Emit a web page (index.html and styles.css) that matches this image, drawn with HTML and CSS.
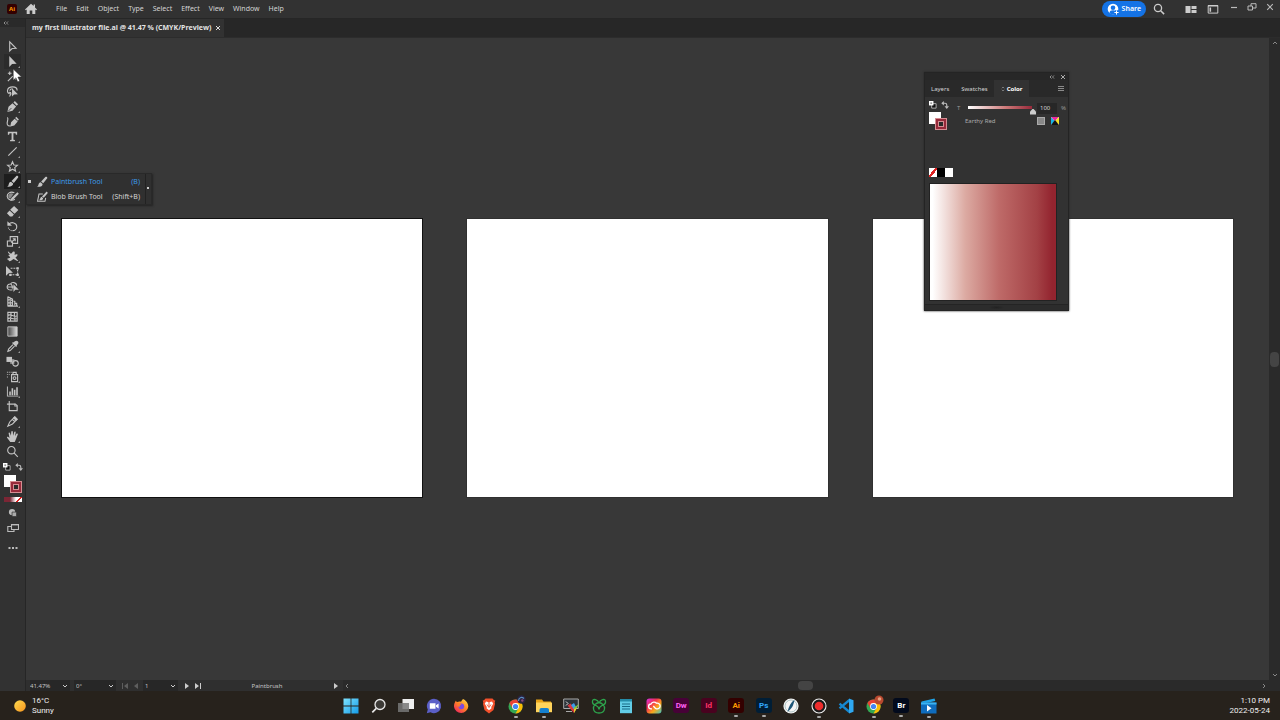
FILE: index.html
```html
<!DOCTYPE html>
<html lang="en">
  <head>
    <meta charset="utf-8">
    <title>my first illustrator file.ai</title>
    <link rel="stylesheet" href="styles.css">
  </head>
  <body>
    <header class="menubar">
      <span class="ai-logo">Ai</span>
      <button class="home" aria-label="Home"><svg viewBox="0 0 12 12"><path d="M6 .8 0 6.4l.8.8.9-.6V11h3V7.6h2.6V11h3V6.6l.9.6.8-.8-2-1.8V1.6H8.6v1.5z"/></svg></button>
      <nav class="menu">
        <a href="#">File</a>
        <a href="#">Edit</a>
        <a href="#">Object</a>
        <a href="#">Type</a>
        <a href="#">Select</a>
        <a href="#">Effect</a>
        <a href="#">View</a>
        <a href="#">Window</a>
        <a href="#">Help</a>
      </nav>
      <button class="share">
        <svg viewBox="0 0 12 12"><circle cx="6" cy="6" r="5.3" fill="#fff"/><circle cx="6" cy="4.8" r="2.3" fill="#1473e6"/><path d="M2.4 10c.3-2 1.5-2.7 3.6-2.7S9.3 8 9.6 10L8 11.2H4z" fill="#1473e6"/><path d="M9.5 7.2v4.6M7.2 9.5h4.6" stroke="#1473e6" stroke-width="3"/><path d="M9.5 7.4v4.2M7.4 9.5h4.2" stroke="#fff"/></svg>
        Share
      </button>
      <button class="bar-icon search" aria-label="Search"><svg viewBox="0 0 12 12"><circle cx="5" cy="5" r="3.6" fill="none" stroke="#ccc" stroke-width="1.3"/><path d="m7.7 7.7 3.4 3.4" stroke="#ccc" stroke-width="1.5"/></svg></button>
      <button class="bar-icon arrange" aria-label="Arrange documents"><svg viewBox="0 0 12 12"><path fill="#ccc" d="M.5 3h5v7h-5zM6.5 3h5v3h-5zM6.5 7h5v3h-5z"/></svg></button>
      <button class="bar-icon workspace-switch" aria-label="Workspaces"><svg viewBox="0 0 12 12"><path d="M1.2 2.5h9.6v7.6H1.2z" fill="none" stroke="#ccc"/><path fill="#ccc" d="M2.5 4.5h1.6v4.3H2.5zM1 2h10v1.5H1z"/></svg></button>
      <div class="window-buttons">
        <button aria-label="Minimize"><svg viewBox="0 0 10 10"><path d="M2 5.5h6" stroke="#bbb" stroke-width="1.2"/></svg></button>
        <button aria-label="Restore"><svg viewBox="0 0 10 10"><path d="M1 4h4.5v4H1zM4 4V1.7h5V6H5.5" fill="none" stroke="#bbb"/></svg></button>
        <button aria-label="Close"><svg viewBox="0 0 10 10"><path d="m2.2 2.2 5.6 5.6M7.8 2.2 2.2 7.8" stroke="#bbb" stroke-width="1.1"/></svg></button>
      </div>
    </header>

    <main class="app">
      <aside class="toolbar">
        <button class="collapse" aria-label="Collapse toolbar"><svg viewBox="0 0 6 4"><path d="M2.5.5 1 2l1.5 1.5M5 .5 3.5 2 5 3.5" fill="none" stroke="#aaa" stroke-width=".8"/></svg></button>
        <ul class="tools">
          <li><button class="tool" aria-label="Selection"><svg viewBox="0 0 14 14"><path class="line" d="M4 2v9.800l2.600-2.600 4.200-.2z"/></svg></button></li>
          <li><button class="tool more hover" aria-label="Direct Selection"><svg viewBox="0 0 14 14"><path d="M3.500 1v12l3-3.200 5-.4z"/></svg></button></li>
          <li><button class="tool" aria-label="Magic Wand"><svg viewBox="0 0 14 14"><path class="line" d="m2 12 5.400-5.400M4 1.500v4M2 3.500h4M8 3l1 1M11 6l-1.500.8M9.500 8.500l1.500 1.500" stroke-width="1.500"/></svg></button></li>
          <li><button class="tool" aria-label="Lasso"><svg viewBox="0 0 14 14"><path class="line" d="M5 9.700C2.800 9.400 1.400 8 1.600 6 2 3 4.600 2 7.200 2S12 3.400 12 5.800M3 8c1.500-.6 2.600.3 2.200 1.700S3.600 11.500 4.200 12.400M4 6c.5-1.500 1.600-2 3-2"/><path d="M6.500 3.500v9l2.300-2.300 4-.2z"/></svg></button></li>
          <li><button class="tool more" aria-label="Pen"><svg viewBox="0 0 14 14"><path d="M1.500 12.800 2.700 7.300 7 3.400 10.900 7 7 11.500zM8 2.800l1.500-1.600 3.500 3.500L11.500 6.200z"/><path d="m2.300 12.200 3.600-3.600" stroke="#323232" stroke-width=".8"/></svg></button></li>
          <li><button class="tool" aria-label="Curvature"><svg viewBox="0 0 14 14"><path d="M4.600 12.500 5.500 7.800 9.300 4l3.300 3.100-3.700 4.200zM9.900 3.200l1.200-1.200 2.800 2.800-1.200 1.500z"/><path class="line" d="M1.500 2.500c2 2-1.500 5.500 0 8 .8 1.300 2.300 1.400 3.400 1.300"/></svg></button></li>
          <li><button class="tool more" aria-label="Type"><svg viewBox="0 0 14 14"><path d="M2 1.900h10v3.200h-1.300l-.5-1.500H8v6.900l1.600.3v1.200H4.400v-1.200l1.600-.3V3.600H3.800l-.5 1.500H2z"/></svg></button></li>
          <li><button class="tool more" aria-label="Line Segment"><svg viewBox="0 0 14 14"><path class="line" d="m2.500 11.500 9-9"/></svg></button></li>
          <li><button class="tool more" aria-label="Star"><svg viewBox="0 0 14 14"><path class="line" d="m7 1.900 1.500 3.500 3.800.3-2.900 2.500.9 3.700L7 9.900l-3.300 2 .9-3.700-2.900-2.500 3.800-.3z"/></svg></button></li>
          <li class="open">
            <button class="tool more active" aria-label="Paintbrush"><svg viewBox="0 0 14 14"><path d="M12.700 1.100c.7.600.7 1.200.2 1.800L8.400 8.500 6 6.500 10.900 1.300c.6-.6 1.200-.7 1.800-.2zM5.400 7.200l2.300 2c.2 2.300-2.500 3.800-6.700 3.400 1.900-.7 1.600-2 2.200-3.500.4-1 1.200-1.700 2.200-1.900z"/></svg></button>
            <div class="flyout">
              <button class="flyout-item current">
                <svg viewBox="0 0 14 14"><path d="M12.700 1.100c.7.600.7 1.200.2 1.800L8.400 8.500 6 6.500 10.900 1.300c.6-.6 1.200-.7 1.800-.2zM5.400 7.200l2.300 2c.2 2.300-2.500 3.800-6.700 3.400 1.900-.7 1.600-2 2.200-3.500.4-1 1.200-1.700 2.200-1.900z"/></svg>
                <span>Paintbrush Tool</span><kbd>(B)</kbd>
              </button>
              <button class="flyout-item">
                <svg viewBox="0 0 14 14"><path class="line" d="M8 3.500H3.500L1.800 12h8.700l.8-4"/><path d="M13 1.200c.8.600.8 1.200.3 1.800L9 8 7 6.300 11.600 1.400c.4-.5.900-.6 1.400-.2zM6.500 6.800 8.300 8.400c0 1.800-1.800 2.800-4.800 2.400 1.500-.6 1.200-3.300 3-4z"/></svg>
                <span>Blob Brush Tool</span><kbd>(Shift+B)</kbd>
              </button>
            </div>
          </li>
          <li><button class="tool more" aria-label="Shaper"><svg viewBox="0 0 14 14"><path class="line" d="M9 3C4.500 1 1 4 1.300 7s4.700 5.500 8.200 3"/><path d="M12.300 2.300 13.800 4 7.800 10.300l-3 1.200 1-3z"/><path opacity=".6" d="M2.500 5.500C4 3.500 6 3 8 4.200L4.500 9.500 2.500 8z"/></svg></button></li>
          <li><button class="tool more" aria-label="Eraser"><svg viewBox="0 0 14 14"><path d="M8.700 1 13.300 5.500 9.200 9.500 4.500 5.200zM3.900 5.900 8.500 10.200 6.700 12.300H4.300L1 9z"/></svg></button></li>
          <li><button class="tool more" aria-label="Rotate"><svg viewBox="0 0 14 14"><path class="line" d="M3 4.500c3-3 8.600-1.500 8.600 2.700 0 2.400-2 4.300-4.600 4.300" stroke-width="1.500"/><path d="M1.500 1.300v5h5z"/><path class="line" d="M6 11.500C4 11 2.600 9.600 2.500 7.500" stroke-dasharray="1 1"/></svg></button></li>
          <li><button class="tool more" aria-label="Scale"><svg viewBox="0 0 14 14"><path class="line" d="M1.500 6.500H7V12H1.500zM4.500 6.500V1.800h8v7.200H7M5.500 8.300l4.300-4.100M7.300 4h2.600v2.600"/></svg></button></li>
          <li><button class="tool more" aria-label="Width"><svg viewBox="0 0 14 14"><path d="M2 1.500c1.500.2 1.800 2 3.300 2.200C6.800 3.900 6.600 1.600 8.300 1.500c1.600 0 1.300 2.200.8 3.600 1.600-.3 2.200-.7 3.400-.1-.3 1.800-1.500 2-2.300 2.900.6 1.500 2 2.500 3 3.700-2 .8-3.500-1.200-5-1.800-1.400.5-2.600 2.500-4.400 2.200-1.300-.3-.9-1.900-2.800-2 .8-1.600 2.700-1 3.600-2C4 6.800 3 6.700 2.500 5.300 3.300 5 3.700 5.200 4.200 5 3.500 4 2 3.200 2 1.500z"/></svg></button></li>
          <li><button class="tool more" aria-label="Free Transform"><svg viewBox="0 0 14 14"><path d="M0 1v10.500l3.200-2.800 4.300-.3z"/><path class="line" d="M5 3.500h7.500v7H4" stroke-dasharray="2 1"/><path d="M3.500 9.300H6v2.500H3.500zM11.300 2.300h2.500v2.500h-2.500zM11.300 9.300h2.500v2.500h-2.500z"/></svg></button></li>
          <li><button class="tool more" aria-label="Shape Builder"><svg viewBox="0 0 14 14"><path class="line" d="M7 10.500C3 11.500 1 9.500 1.200 7.300S3.500 4 5 4.300C6 2 11 2 11.500 6M1.500 7.500h7M5 4.300c1.600.7 2 2 1.800 5"/><path d="M8 4.500v8.300l2-2.200 3.800-.2z"/></svg></button></li>
          <li><button class="tool more" aria-label="Perspective Grid"><svg viewBox="0 0 14 14"><path class="line" d="M2 1.500v11M2 2l5 2.500v6.300L2 11.500M2 5l5 1M2 8.300l5 .2M4.500 3.200V11M8 6.500l1.500.5v4M9.500 9h2v2.200M2 12h11"/></svg></button></li>
          <li><button class="tool" aria-label="Mesh"><svg viewBox="0 0 14 14"><path class="line" d="M2 2.500h10v9.500H2zM2 6c4-3 6 3 10 0M2 9.500c3-2.500 6 2 10-.5M5 2.500c2 3-1 6 0 9.500M9.500 2.500c-2 3 1.500 6 0 9.500"/></svg></button></li>
          <li><button class="tool" aria-label="Gradient"><svg viewBox="0 0 14 14"><defs><linearGradient id="tool-gradient"><stop offset="0" stop-color="#444"/><stop offset="1" stop-color="#ddd"/></linearGradient></defs><path d="M2 2h10v10H2z" fill="url(#tool-gradient)" stroke="#c4c4c4"/></svg></button></li>
          <li><button class="tool more" aria-label="Eyedropper"><svg viewBox="0 0 14 14"><path d="M12.700 1.300c1 1 .9 2.400-.3 3.500l-1 1 .6.600-1.200 1.200-4.300-4.300 1.100-1.100.6.500 1-1c1.100-1.100 2.500-1.400 3.500-.4z"/><path class="line" d="M7.500 5 2.800 9.700l-.8 2.500 2.500-.8L9.200 6.700"/></svg></button></li>
          <li><button class="tool" aria-label="Blend"><svg viewBox="0 0 14 14"><path d="M.5 2h6v5.500h-6z"/><path opacity=".7" d="M4.500 4.500H9v5H4.500z"/><circle class="line" cx="10.200" cy="9" r="3"/></svg></button></li>
          <li><button class="tool more" aria-label="Symbol Sprayer"><svg viewBox="0 0 14 14"><path class="line" d="M6 5h6.500v7.500H6zM7.500 5V2.500H11V5"/><circle class="line" cx="9.200" cy="8.700" r="1.500"/><path d="M1 2h1v1H1zM3 2h1v1H3zM5 2h1v1H5zM1 4.500h1v1H1zM3 4.500h1v1H3zM1 7h1v1H1z"/></svg></button></li>
          <li><button class="tool more" aria-label="Column Graph"><svg viewBox="0 0 14 14"><path d="M1 1.500v11h12.500v-1H2v-10zM3.500 7h1.700v4H3.500zM6 3.500h1.700V11H6zM8.500 5h1.700v6H8.500zM11 2.500h1.700V11H11z"/></svg></button></li>
          <li><button class="tool" aria-label="Artboard"><svg viewBox="0 0 14 14"><path class="line" d="M3.500 1v10.500h8.500V6L10 4.500H1"/><path d="M9 4h1v2h2v1H9z"/></svg></button></li>
          <li><button class="tool more" aria-label="Slice"><svg viewBox="0 0 14 14"><path class="line" d="M9.500 2 12 4.500 7 9.700 2 12l2-4.500zM7 5l2.500 2"/><path d="m9.500 1.300 3.200 3.200-2 2-3.200-3.200z"/></svg></button></li>
          <li><button class="tool more" aria-label="Hand"><svg viewBox="0 0 14 14"><path d="M4.600 12.900 1.200 8.300c-.5-.9.5-1.600 1.300-.8L3.800 8.700 2.800 3.600c-.2-1.100 1.200-1.300 1.500-.3L5.300 6.300 5.700 1.800c0-1 1.600-1 1.700 0l.2 4.300L8.900 2.200c.3-1 1.700-.6 1.500.4L9.700 6.800l1.600-2.700c.5-.8 1.700-.3 1.400.7L10.700 10l-1.300 2.900z"/></svg></button></li>
          <li><button class="tool" aria-label="Zoom"><svg viewBox="0 0 14 14"><circle class="line" cx="5.800" cy="5.600" r="4"/><path class="line" d="m8.600 8.500 4.100 4.200" stroke-width="1.700"/></svg></button></li>
        </ul>
        <div class="swap-row">
          <svg viewBox="0 0 9 9"><path d="M3 3h5v5H3z" fill="#111" stroke="#bbb"/><path d="M0 0h5v5H0z" fill="#fff"/><path d="M1.500 1.500h2v2h-2z" fill="#999"/></svg>
          <svg viewBox="0 0 9 9"><path d="M2 2.500h2.500c1.500 0 2 1 2 2v2" fill="none" stroke="#bbb" stroke-width="1.300"/><path d="M3.200 0v5L.3 2.500zM4 5.800h5L6.500 8.900z" fill="#bbb"/></svg>
        </div>
        <div class="paint"><span class="fill"></span><span class="stroke"></span></div>
        <div class="modes"><i class="solid"></i><i class="fade"></i><i class="none"></i></div>
        <button class="draw-mode" aria-label="Drawing modes"><svg viewBox="0 0 10 10"><circle cx="4.500" cy="4.500" r="3.500" fill="#bbb"/><path d="M4.500 4.500h5v5h-5z" fill="#aaa" stroke="#323232" stroke-width=".8"/></svg></button>
        <button class="screen-mode" aria-label="Screen mode"><svg viewBox="0 0 12 12"><path d="M4.500 2.500h7v5h-7zM7 7.500v2H.8v-5h3.700" fill="none" stroke="#bbb" stroke-width="1.100"/><path d="M4 2h8v1.400H4z" fill="#bbb"/></svg></button>
        <button class="edit-toolbar" aria-label="Edit toolbar"><svg viewBox="0 0 10 4"><path d="M.5 1h2v2h-2zM4 1h2v2H4zM7.500 1h2v2h-2z" fill="#bbb"/></svg></button>
      </aside>

      <section class="document">
        <div class="tabs">
          <div class="tab"><span>my first illustrator file.ai @ 41.47 % (CMYK/Preview)</span><button aria-label="Close tab"><svg viewBox="0 0 6 6"><path d="m1 1 4 4M5 1 1 5" stroke="#ddd"/></svg></button></div>
        </div>
        <div class="view">
          <div class="canvas">
            <div class="artboard selected"></div>
            <div class="artboard"></div>
            <div class="artboard"></div>
          </div>
          <div class="scroll-v">
            <svg viewBox="0 0 6 6"><path d="m1 4 2-2 2 2" fill="none" stroke="#888"/></svg>
            <span></span>
            <svg viewBox="0 0 6 6"><path d="m1 2 2 2 2-2" fill="none" stroke="#888"/></svg>
          </div>
        </div>
        <footer class="status">
          <label class="combo zoom"><select aria-label="Zoom"><option>41.47%</option></select><svg viewBox="0 0 6 6"><path d="m1 2 2 2 2-2"/></svg></label>
          <label class="combo rotation"><select aria-label="Rotate view"><option>0°</option></select><svg viewBox="0 0 6 6"><path d="m1 2 2 2 2-2"/></svg></label>
          <div class="pager">
            <button disabled aria-label="First artboard"><svg viewBox="0 0 6 6"><path d="M0 0h1v6H0zM6 0v6L2 3z"/></svg></button>
            <button disabled aria-label="Previous artboard"><svg viewBox="0 0 6 6"><path d="M5 0v6L1 3z"/></svg></button>
          </div>
          <label class="combo page"><select aria-label="Artboard"><option>1</option></select><svg viewBox="0 0 6 6"><path d="m1 2 2 2 2-2"/></svg></label>
          <div class="pager">
            <button aria-label="Next artboard"><svg viewBox="0 0 6 6"><path d="M1 0v6l4-3z"/></svg></button>
            <button aria-label="Last artboard"><svg viewBox="0 0 6 6"><path d="M0 0v6l4-3zM5 0h1v6H5z"/></svg></button>
          </div>
          <span class="current-tool">Paintbrush</span>
          <button class="status-menu" aria-label="Status menu"><svg viewBox="0 0 6 6"><path d="M1 0v6l4-3z"/></svg></button>
          <div class="scroll-h">
            <svg viewBox="0 0 6 6"><path d="M4 1 2 3l2 2" fill="none" stroke="#888"/></svg>
            <span></span>
            <svg viewBox="0 0 6 6"><path d="m2 1 2 2-2 2" fill="none" stroke="#888"/></svg>
          </div>
        </footer>
      </section>

      <section class="panel">
        <div class="panel-bar">
          <button aria-label="Collapse panel"><svg viewBox="0 0 6 6"><path d="M2.500 1.500 1 3l1.500 1.500M5 1.500 3.500 3 5 4.500" fill="none" stroke="#aaa" stroke-width=".8"/></svg></button>
          <button aria-label="Close panel"><svg viewBox="0 0 6 6"><path d="m1 1 4 4M5 1 1 5" stroke="#aaa"/></svg></button>
        </div>
        <div class="panel-tabs">
          <button>Layers</button>
          <button>Swatches</button>
          <button class="on"><svg viewBox="0 0 4 6"><path d="m.8 2.200 1.200-1.200 1.200 1.200M.8 3.800 2 5l1.200-1.200" fill="none" stroke="#999" stroke-width=".7"/></svg>Color</button>
          <button class="panel-menu" aria-label="Panel menu"><svg viewBox="0 0 6 6"><path d="M0 0h6v1H0zM0 2h6v1H0zM0 4h6v1H0z" fill="#8a8a8a"/></svg></button>
        </div>
        <div class="panel-body">
          <div class="mix">
            <div class="proxy">
              <div class="swap-row">
                <svg viewBox="0 0 9 9"><path d="M3 3h5v5H3z" fill="#111" stroke="#bbb"/><path d="M0 0h5v5H0z" fill="#fff"/><path d="M1.500 1.500h2v2h-2z" fill="#999"/></svg>
                <svg viewBox="0 0 9 9"><path d="M2 2.500h2.500c1.500 0 2 1 2 2v2" fill="none" stroke="#bbb" stroke-width="1.300"/><path d="M3.200 0v5L.3 2.500zM4 5.800h5L6.500 8.900z" fill="#bbb"/></svg>
              </div>
              <div class="paint"><span class="fill"></span><span class="stroke"></span></div>
            </div>
            <div class="sliders">
              <div class="tint">
                <label for="tint">T</label>
                <input type="range" id="tint" min="0" max="100" value="100">
                <input type="text" id="tint-value" value="100" aria-label="Tint value">
                <span>%</span>
              </div>
              <div class="spot">
                <span>Earthy Red</span>
                <i class="spot-mode"></i>
                <svg viewBox="0 0 8 8"><path fill="#fff" d="M0 0h8v8H0z"/><path fill="#19b5e8" d="M0 0v8l4-4z"/><path fill="#e8289a" d="M0 0h8L4 4z"/><path fill="#f5e025" d="M8 0v8L4 4z"/><path fill="#111" d="M0 8h8L4 3z"/></svg>
              </div>
            </div>
          </div>
          <div class="quick"><i class="none"></i><i class="black"></i><i class="white"></i></div>
          <div class="ramp"></div>
        </div>
        <div class="panel-grip"></div>
      </section>

      <svg class="cursor" viewBox="0 0 10 14"><path d="M1 1v10.500l2.500-2.300 1.700 3.800 1.900-.9-1.700-3.600 3.400-.2z" fill="#fff" stroke="#222" stroke-width=".5"/></svg>
    </main>

    <footer class="taskbar">
      <button class="weather">
        <svg viewBox="0 0 12 12"><defs><linearGradient id="sun" x2="1" y2="1"><stop offset="0" stop-color="#ffdc50"/><stop offset="1" stop-color="#f7941d"/></linearGradient></defs><circle cx="6" cy="6" r="5.800" fill="url(#sun)"/></svg>
        <span>16°C<br>Sunny</span>
      </button>
      <div class="apps">
        <button aria-label="Start"><svg viewBox="0 0 16 16"><defs><linearGradient id="win" x2="1" y2="1"><stop offset="0" stop-color="#7ee3ff"/><stop offset="1" stop-color="#149be8"/></linearGradient></defs><path fill="url(#win)" d="M.5.500h7.100v7.100H.5zM8.400.500h7.100v7.100H8.400zM.5 8.400h7.100v7.100H.5zM8.400 8.400h7.100v7.100H8.400z"/></svg></button>
        <button aria-label="Search"><svg viewBox="0 0 16 16"><circle cx="9" cy="6.500" r="5" fill="#3c3a36" stroke="#e8e8e8" stroke-width="1.300"/><path d="m5.300 10.300-4 4" stroke="#e8e8e8" stroke-width="1.700"/></svg></button>
        <button aria-label="Task view"><svg viewBox="0 0 16 16"><path fill="#eee" d="M4.500 1H16v10H4.500z"/><path fill="#777" fill-opacity=".85" d="M0 5h11v9H0z"/></svg></button>
        <button aria-label="Chat"><svg viewBox="0 0 16 16"><path fill="#5b5fc7" d="M8 .8A7.200 7.200 0 1 1 4.500 14.300L.8 15.200l1-3.600A7.200 7.200 0 0 1 8 .8z"/><path fill="#fff" d="M3.800 5.300h5.700v5.400H3.800zM10 7.300l2.600-1.700v4.800L10 8.800z"/></svg></button>
        <button aria-label="Firefox"><svg viewBox="0 0 16 16"><defs><linearGradient id="fox" x1="1" y1="0" x2=".2" y2="1"><stop offset="0" stop-color="#ffe14a"/><stop offset=".5" stop-color="#ff8a24"/><stop offset="1" stop-color="#f0245e"/></linearGradient></defs><path fill="url(#fox)" d="M10 1c2.500 1 5.300 4 5.300 7.500A7.200 7.200 0 0 1 1 8.700C.8 6.500 1.600 4.500 3 2.500c.2 1 .6 1.400 1.200 1.600C5.500 3.300 7 3.200 8 3.800c.6-1.300 1.300-2 2-2.800z"/><circle cx="8.300" cy="8.300" r="2.900" fill="#7b4ae0"/><path fill="#ff7a28" d="M4 5.500c2-.6 3.500 0 4.600 1.300-2 .2-2.200 1-1.700 2C4.600 9 3.500 7.500 4 5.500z"/></svg></button>
        <button aria-label="Brave"><svg viewBox="0 0 16 16"><path fill="#f4512c" d="M4.500.500h7L13 2.200l1.300.3-.6 2 .3 1.500-1.500 6L8 15.600 3.500 12 2 6l.3-1.500-.6-2L3 2.200z"/><path fill="#fff" d="m5 3.500 3 .7 3-.7 1.200 2.300-2 3.200.3 1.200L8 12.300 5.500 10.200 5.800 9l-2-3.200z"/><path d="m6 6.500 2 3 2-3M8 4v4" stroke="#f4512c" stroke-width=".9" fill="none"/></svg></button>
        <button class="running" aria-label="Chrome"><svg viewBox="0 0 16 16"><circle cx="7.500" cy="8.500" r="7" fill="#34a853"/><path fill="#ea4335" d="M1.400 5A7 7 0 0 1 13.600 5H7.500L4.500 10.300z"/><path fill="#fbbc05" d="M13.600 5a7 7 0 0 1-6.100 10.500l3-5.200L7.500 5z"/><circle cx="7.500" cy="8.500" r="3.400" fill="#fff"/><circle cx="7.500" cy="8.500" r="2.600" fill="#4285f4"/><circle cx="13.500" cy="1.500" r="4.200" fill="#2a2444"/><path fill="none" stroke="#5a8fc0" stroke-width="1.200" d="M10.500 3c0-3.500 3-4.500 5.500-2.500"/><circle cx="14.300" cy="2.500" r="1.200" fill="#8a4a78"/></svg></button>
        <button class="running" aria-label="File Explorer"><svg viewBox="0 0 16 16"><path fill="#e8a317" d="M0 1.500h6l1.500 2H15V8H0z"/><path fill="#ffd45c" d="M0 4.500h16v9.700H0z"/><path fill="#1580cf" d="M3.500 15v-3c0-1.300.7-2 2-2h5.500c1.300 0 2 .7 2 2v3z"/></svg></button>
        <button aria-label="Display tool"><svg viewBox="0 0 16 16"><path d="M.7 1h14.600v9.500H.7zM3 13.500h6" fill="#2d3338" stroke="#aaa"/><path d="m3 3.500 2 2-2 2" stroke="#ddd" fill="none"/><path fill="#d8383c" d="m4.500 7.500 3-2 3.500 5.500V15z"/><path fill="#3d9be9" d="m8 7 3-2 2 4-2.500 2z"/><path fill="#7dc43c" d="m16 6-5 9V9.500z"/><path fill="#f1c232" d="m11 11 3-1-3 5z"/></svg></button>
        <button aria-label="Game hub"><svg viewBox="0 0 16 16"><path d="M8 4.500C5 5 2 7.500 2.500 11c.5 3.300 3.500 4 5.500 4s5-.7 5.500-4C14 7.500 11 5 8 4.500zM8 5C6.500 1.500 2 .3 1.500 3S3.500 7 5 7.500c1.500.7 3 2 3 4M8 5c1.500-3.500 6-4.700 6.500-2S12.500 7 11 7.500c-1.500.7-3 2-3 4" fill="none" stroke="#2da34c" stroke-width="1.300"/></svg></button>
        <button aria-label="Notepad"><svg viewBox="0 0 16 16"><path fill="#62cde6" d="M2 1.500h12v13.700H2z"/><path fill="#258ca8" d="M2 1h12v2.500H2z"/><path d="M4 6h8M4 8.500h8M4 11h8" stroke="#176a86"/></svg></button>
        <button aria-label="Creative Cloud"><svg viewBox="0 0 16 16"><defs><linearGradient id="cc" x2="1" y2="1"><stop offset="0" stop-color="#d32fe6"/><stop offset=".35" stop-color="#f32f52"/><stop offset=".65" stop-color="#fba919"/><stop offset="1" stop-color="#35c4c8"/></linearGradient></defs><rect x=".5" y=".500" width="15" height="15" rx="3" fill="url(#cc)"/><path d="M6 10.800H5A2.400 2.400 0 0 1 5 6a3.300 3.300 0 0 1 5.500-.8A2.900 2.900 0 1 1 10.500 10.800C9 10.800 8.500 9 7.300 8" fill="none" stroke="#fff" stroke-width="1.300"/></svg></button>
        <button aria-label="Dreamweaver"><span class="adobe dw">Dw</span></button>
        <button aria-label="InDesign"><span class="adobe id">Id</span></button>
        <button class="running" aria-label="Illustrator"><span class="adobe ai">Ai</span></button>
        <button class="running" aria-label="Photoshop"><span class="adobe ps">Ps</span></button>
        <button aria-label="Pen app"><svg viewBox="0 0 16 16"><circle cx="8" cy="8" r="7.600" fill="#f5f5f5"/><circle cx="8" cy="8" r="6" fill="none" stroke="#8aa" stroke-width=".7"/><path d="M11.500 2C8 4 6 8 4.500 13.500 9 11 10.500 7 11.500 2z" fill="#1c5577"/></svg></button>
        <button class="running" aria-label="Recorder"><svg viewBox="0 0 16 16"><circle cx="8" cy="8" r="7" fill="#1c1c1c" stroke="#eee" stroke-width="1.100"/><circle cx="8" cy="8" r="4.300" fill="#ee2c2c"/></svg></button>
        <button aria-label="Visual Studio Code"><svg viewBox="0 0 16 16"><path d="m11.500 2-10 8.300M11.500 14l-10-8.300" stroke="#1687cf" stroke-width="2.400"/><path fill="#2fa8f0" d="m11 .5 4.500 1.800v11.400L11 15.500z"/></svg></button>
        <button class="running" aria-label="Chrome profile"><svg viewBox="0 0 16 16"><circle cx="7.500" cy="8.500" r="7" fill="#34a853"/><path fill="#ea4335" d="M1.400 5A7 7 0 0 1 13.600 5H7.500L4.500 10.300z"/><path fill="#fbbc05" d="M13.600 5a7 7 0 0 1-6.100 10.500l3-5.200L7.500 5z"/><circle cx="7.500" cy="8.500" r="3.400" fill="#fff"/><circle cx="7.500" cy="8.500" r="2.600" fill="#4285f4"/><circle cx="13" cy="2" r="4.500" fill="#b9492f"/><circle cx="13.500" cy="1" r="1.800" fill="#e8a080"/></svg></button>
        <button class="running" aria-label="Bridge"><span class="adobe br">Br</span></button>
        <button class="running" aria-label="Movies"><svg viewBox="0 0 16 16"><path fill="#1fa4e8" d="m.5 3.500 13-3 .8 2.500L.5 6z"/><path fill="#0f6cbd" d="M0 4.500h15.500v11H0z"/><path fill="#3ab4f2" d="M0 4.500h15.500v2H0z"/><path fill="#fff" d="m6 7 4.500 3.300L6 13.500z"/></svg></button>
      </div>
      <time class="clock" datetime="2022-05-24T13:10">1:10 PM<br>2022-05-24</time>
    </footer>
  </body>
</html>
```

FILE: styles.css
```css
* {
  box-sizing: border-box;
}

body {
  margin: 0;
  height: 100vh;
  display: flex;
  flex-direction: column;
  overflow: hidden;
  background: #323232;
  color: #d4d4d4;
  font-family: "Noto Sans", sans-serif;
  font-size: 7px;
  line-height: 10px;
}

button, input, select {
  font: inherit;
  color: inherit;
  background: none;
  border: none;
  padding: 0;
  margin: 0;
}

svg {
  display: block;
}

/* menu bar */

.menubar {
  height: 19px;
  flex: none;
  display: flex;
  align-items: center;
  border-bottom: 1px solid #262626;
}

.ai-logo {
  margin-left: 7px;
  width: 10px;
  height: 10px;
  border-radius: 2px;
  background: #330000;
  color: #ff9a00;
  font-size: 6px;
  font-weight: bold;
  text-align: center;
}

.home {
  margin-left: 8px;
}

.home svg {
  width: 12px;
  height: 12px;
  fill: #ccc;
}

.menu {
  display: flex;
  gap: 9px;
  margin-left: 19px;
}

.menu a {
  color: inherit;
  text-decoration: none;
}

.share {
  display: flex;
  align-items: center;
  gap: 3px;
  height: 16px;
  margin-left: auto;
  padding: 0 5px;
  border-radius: 8px;
  background: #1473e6;
  color: #fff;
  font-weight: 600;
}

.share svg, .bar-icon svg {
  width: 12px;
  height: 12px;
}

.search {
  margin-left: 7px;
}

.arrange {
  margin-left: 20px;
}

.workspace-switch {
  margin-left: 10px;
}

.window-buttons {
  display: flex;
  gap: 8px;
  align-self: flex-start;
  margin: 2px 5px 0 10px;
}

.window-buttons svg {
  width: 10px;
  height: 10px;
}

/* main area */

.app {
  position: relative;
  flex: 1;
  display: flex;
  min-height: 0;
}

.toolbar {
  width: 26px;
  flex: none;
  display: flex;
  flex-direction: column;
  align-items: center;
  border-right: 1px solid #262626;
}

.collapse {
  align-self: stretch;
  height: 8px;
  margin-bottom: 12px;
  padding-left: 3px;
  background: #2a2a2a;
}

.collapse svg {
  width: 6px;
  height: 4px;
}

.tools {
  list-style: none;
  margin: 0;
  padding: 0;
}

.tools li {
  position: relative;
}

.tool {
  position: relative;
  display: flex;
  align-items: center;
  justify-content: center;
  width: 17px;
  height: 15px;
}

.tool svg {
  width: 13px;
  height: 13px;
}

.tool svg, .flyout svg {
  fill: #c4c4c4;
}

.line {
  fill: none;
  stroke: #c4c4c4;
  stroke-width: 1.2;
}

.tool.more::after {
  content: "";
  position: absolute;
  right: 1px;
  bottom: 1px;
  border: 1px solid #999;
  border-top-color: transparent;
  border-left-color: transparent;
}

.tool.hover {
  background: #2b2b2b;
}

.tool.active {
  background: #1d1d1d;
}

.flyout {
  position: absolute;
  z-index: 2;
  left: 22px;
  top: -1px;
  width: 126px;
  padding-right: 6px;
  background: #303030;
  border: 1px solid #292929;
  box-shadow: 1px 1px 2px #222;
}

.flyout::after {
  content: "";
  position: absolute;
  right: 0;
  top: 0;
  bottom: 0;
  width: 5px;
  border-left: 1px solid #222;
  background: radial-gradient(circle at 2px 14px, #ccc 1px, transparent 1px);
}

.flyout-item {
  position: relative;
  display: flex;
  align-items: center;
  width: 100%;
  height: 15px;
  padding: 0 5px 0 9px;
}

.flyout-item svg {
  width: 12px;
  height: 12px;
  margin-right: 3px;
}

.flyout-item kbd {
  margin-left: auto;
  font: inherit;
}

.flyout-item.current {
  color: #3d9be9;
}

.flyout-item.current::before {
  content: "";
  position: absolute;
  left: 1px;
  top: 6px;
  width: 3px;
  height: 3px;
  background: #ccc;
}

.swap-row {
  display: flex;
  gap: 4px;
}

.swap-row svg {
  width: 8px;
  height: 8px;
}

.toolbar .swap-row {
  margin-top: 4px;
}

/* fill and stroke squares overlap */

.paint {
  display: grid;
  width: 18px;
  height: 18px;
}

.paint span {
  grid-area: 1 / 1;
  width: 12px;
  height: 12px;
}

.paint .fill {
  background: #fff;
}

.paint .stroke {
  place-self: end;
  border: 3px solid #97293a;
  outline: 1px solid #d58d92;
  outline-offset: -1px;
  background: #2a2a2a;
  box-shadow: inset 0 0 0 1px #d58d92;
}

.toolbar .paint {
  margin-top: 4px;
}

.modes {
  display: flex;
  margin-top: 4px;
}

.modes i {
  width: 6px;
  height: 5px;
}

.modes .solid {
  background: #7c2635;
}

.modes .fade {
  background: linear-gradient(90deg, #7c2635, #fff);
}

.none {
  background: linear-gradient(to bottom right, #fff 40%, #d22 40%, #d22 60%, #fff 60%);
}

.draw-mode {
  margin-top: 6px;
}

.draw-mode svg {
  width: 9px;
  height: 9px;
}

.screen-mode {
  margin-top: 5px;
}

.screen-mode svg {
  width: 12px;
  height: 12px;
}

.edit-toolbar {
  margin-top: 12px;
}

.edit-toolbar svg {
  width: 10px;
  height: 4px;
}

.cursor {
  position: absolute;
  left: 12px;
  top: 49px;
  width: 11px;
  height: 15px;
}

/* document window */

.document {
  flex: 1;
  min-width: 0;
  display: flex;
  flex-direction: column;
}

.tabs {
  height: 19px;
  flex: none;
  display: flex;
  background: #272727;
  border-bottom: 1px solid #2c2c2c;
}

.tab {
  display: flex;
  align-items: center;
  gap: 4px;
  padding: 0 3px 0 6px;
  background: #323232;
  color: #e4e4e4;
  font-family: "Open Sans", sans-serif;
  font-weight: bold;
}

.tab svg {
  width: 6px;
  height: 6px;
}

.view {
  flex: 1;
  display: flex;
  min-height: 0;
}

.canvas {
  flex: 1;
  display: grid;
  grid-template-columns: repeat(3, 1fr);
  gap: 45px;
  align-content: start;
  padding: 181px 36px 0;
  background: #383838;
}

.artboard {
  aspect-ratio: 360 / 278;
  background: #fff;
  outline: 1px solid #303030;
}

.artboard.selected {
  outline-color: #111;
}

.scroll-v {
  width: 11px;
  display: flex;
  flex-direction: column;
  align-items: center;
  justify-content: space-between;
  padding: 2px 0;
  background: #2a2a2a;
}

.scroll-v svg, .scroll-h svg {
  width: 6px;
  height: 6px;
}

.scroll-v span {
  width: 9px;
  height: 15px;
  border-radius: 4px;
  background: #444;
}

.status {
  height: 11px;
  flex: none;
  display: flex;
  align-items: center;
  background: #2f2f2f;
  color: #c4c4c4;
  font-size: 6px;
}

.status svg {
  width: 6px;
  height: 6px;
  fill: #ccc;
}

.combo {
  display: flex;
  align-items: center;
  height: 11px;
  margin-left: 4px;
  background: #272727;
}

.combo select {
  appearance: none;
  flex: 1;
  min-width: 0;
}

.combo svg {
  margin-right: 2px;
  fill: none;
  stroke: #ccc;
}

.zoom {
  width: 40px;
}

.rotation {
  width: 42px;
  padding-left: 2px;
}

.page {
  width: 35px;
  padding-left: 2px;
}

.pager {
  display: flex;
  gap: 5px;
  margin-left: 6px;
}

.pager button:disabled {
  opacity: .3;
}

.current-tool {
  width: 124px;
  margin-left: 4px;
  text-align: center;
}

.status-menu {
  margin-left: 4px;
}

.scroll-h {
  flex: 1;
  display: flex;
  align-items: center;
  justify-content: space-between;
  align-self: stretch;
  margin-left: 4px;
  padding: 0 13px 0 1px;
  background: #2a2a2a;
}

.scroll-h span {
  width: 15px;
  height: 9px;
  border-radius: 4px;
  background: #444;
}

/* color panel */

.panel {
  position: absolute;
  right: 211px;
  top: 53px;
  width: 145px;
  background: #323232;
  border: 1px solid #242424;
  box-shadow: 0 0 2px #222;
  font-size: 6px;
}

.panel svg {
  width: 6px;
  height: 6px;
}

.panel-bar {
  display: flex;
  justify-content: flex-end;
  align-items: center;
  gap: 5px;
  height: 7px;
  padding-right: 2px;
  background: #272727;
}

.panel-tabs {
  display: flex;
  height: 17px;
  background: #292929;
}

.panel-tabs button {
  padding: 0 6px;
}

.panel-tabs .on {
  display: flex;
  align-items: center;
  gap: 1px;
  background: #323232;
  color: #fff;
  font-weight: bold;
}

.panel-tabs .panel-menu {
  margin-left: auto;
  padding-right: 4px;
}

.panel-body {
  padding: 4px 11px 3px 4px;
}

.mix {
  display: flex;
  height: 67px;
}

.panel .swap-row svg {
  width: 8px;
  height: 8px;
}

.proxy .paint {
  margin-top: 3px;
}

.sliders {
  flex: 1;
  margin: 1px -10px 0 8px;
}

.tint, .spot {
  display: flex;
  align-items: center;
}

.tint label {
  width: 11px;
  color: #999;
}

.tint input[type="range"] {
  appearance: none;
  width: 68px;
  height: 12px;
  background: linear-gradient(90deg, #fff, #c77 60%, #97293a) 0 4px / 64px 3px no-repeat;
}

.tint input[type="range"]::-webkit-slider-thumb {
  appearance: none;
  width: 6px;
  height: 6px;
  margin-top: 7px;
  background: #ccc;
  clip-path: polygon(50% 0, 100% 50%, 100% 100%, 0 100%, 0 50%);
}

.tint input[type="text"] {
  width: 20px;
  height: 11px;
  margin-left: 1px;
  padding-left: 3px;
  background: #272727;
}

.tint span {
  margin-left: 4px;
  color: #999;
}

.spot {
  margin-top: 2px;
  padding-left: 8px;
  color: #aaa;
}

.spot span {
  width: 72px;
}

.spot-mode {
  width: 8px;
  height: 8px;
  background: #888;
  border: 1px solid #aaa;
}

.panel .spot svg {
  width: 8px;
  height: 8px;
  margin-left: 6px;
}

.quick {
  display: flex;
}

.quick i {
  width: 8px;
  height: 9px;
}

.black {
  background: #000;
}

.white {
  background: #fff;
}

.ramp {
  height: 118px;
  margin-top: 6px;
  border: 1px solid #222;
  background: linear-gradient(90deg, #fff 2%, #dcaaa2 28%, #be6a68 55%, #a34145 85%, #93242f 97%);
}

.panel-grip {
  height: 6px;
  border-top: 1px solid #242424;
  background: radial-gradient(ellipse 8px 2px, #222, transparent) #2c2c2c;
}

/* windows taskbar */

.taskbar {
  height: 29px;
  flex: none;
  display: grid;
  grid-template-columns: 1fr 594px 1fr;
  align-items: center;
  background: #27221c;
  color: #eee;
  font-family: Roboto, sans-serif;
  font-size: 8px;
}

.weather {
  display: flex;
  align-items: center;
  gap: 6px;
  padding-left: 14px;
  text-align: left;
}

.weather svg {
  width: 12px;
  height: 12px;
}

.apps {
  display: flex;
  justify-content: space-between;
  align-items: center;
}

.apps button {
  position: relative;
}

.apps svg {
  width: 16px;
  height: 16px;
  overflow: visible;
}

.running::after {
  content: "";
  position: absolute;
  left: 6px;
  bottom: -4px;
  width: 4px;
  height: 2px;
  border-radius: 1px;
  background: #aaa;
}

.adobe {
  display: block;
  width: 16px;
  height: 15px;
  border-radius: 3px;
  font-size: 8px;
  font-weight: bold;
  line-height: 15px;
}

.dw {
  background: #470137;
  color: #ff61f6;
}

.id {
  background: #49021f;
  color: #ff3366;
}

.ai {
  background: #330000;
  color: #ff9a00;
}

.ps {
  background: #001e36;
  color: #31a8ff;
}

.br {
  background: #020a1c;
  color: #fff;
}

.clock {
  padding-right: 10px;
  text-align: right;
}
```
